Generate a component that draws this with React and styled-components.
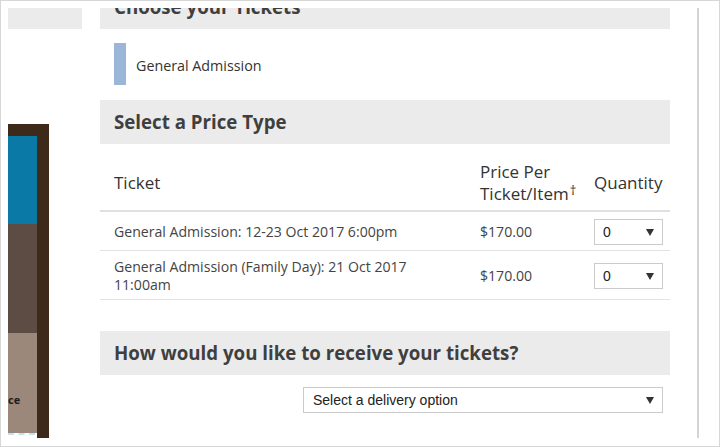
import React from "react";
import styled, { createGlobalStyle } from "styled-components";

const Global = createGlobalStyle`
  html, body { margin: 0; padding: 0; background: #fff; }
  * { box-sizing: border-box; }
`;

const Frame = styled.div`
  width: 720px;
  height: 447px;
  border: 1px solid #d6d6d6;
  padding: 7px 0 0 7px;
  display: flex;
  align-items: flex-start;
  overflow: hidden;
  font-family: "Open Sans", "DejaVu Sans", sans-serif;
  color: #333;
`;

const Sidebar = styled.aside`
  width: 74px;
  display: flex;
  flex-direction: column;
`;

const SideTab = styled.div`
  height: 21px;
  background: #ebebeb;
`;

const Banner = styled.div`
  margin-top: 95px;
  width: 41px;
  height: 314px;
  border-top: 12px solid #3d2a1a;
  border-right: 12px solid #3d2a1a;
  display: flex;
  flex-direction: column;
  background: #fff;
`;

const BannerBlock = styled.div`
  height: ${(p) => p.$h}px;
  background: ${(p) => p.$bg};
  display: flex;
  align-items: flex-end;
  padding-bottom: ${(p) => (p.$pad ? p.$pad : 0)}px;
  overflow: hidden;
`;

const BannerText = styled.span`
  font-family: "Open Sans", sans-serif;
  font-weight: 700;
  font-size: 11px;
  line-height: 14px;
  color: #1e1e1e;
  white-space: nowrap;
`;

const BannerDash = styled.div`
  height: 3px;
  border-top: 2px dashed #bfe3f2;
  margin-right: 2px;
`;

const Content = styled.main`
  margin-left: 18px;
  width: 599px;
  height: 430px;
  padding-right: 27px;
  border-right: 2px solid #d4d4d4;
  overflow: hidden;
`;

const Heading = styled.h2`
  margin: ${(p) => (p.$top !== undefined ? p.$top : 0)}px 0 0;
  height: 44px;
  padding: 10px 14px;
  background: #ebebeb;
  font-size: 18.7px;
  line-height: 24px;
  font-weight: 700;
  color: #3f3f3f;
  white-space: nowrap;
`;

const ChoiceRow = styled.div`
  display: flex;
  align-items: center;
  padding: 14px 14px 15px;
`;

const ChoiceBar = styled.span`
  width: 12px;
  height: 42px;
  background: #9bb6d9;
  margin-right: 10px;
`;

const ChoiceLabel = styled.span`
  font-size: 14.3px;
  line-height: 20px;
  padding-top: 3px;
  color: #333;
`;

const Table = styled.table`
  width: 570px;
  margin-top: 10px;
  border-collapse: collapse;
  table-layout: fixed;
`;

const Th = styled.th`
  text-align: left;
  font-weight: 400;
  font-size: 17px;
  line-height: 22px;
  color: #333;
  padding: 7px ${(p) => (p.$pr !== undefined ? p.$pr : 14)}px 5px 14px;
  vertical-align: middle;
  border-bottom: 2px solid #e0e0e0;
  white-space: nowrap;
`;

const Dagger = styled.sup`
  font-size: 13px;
  line-height: 0;
  vertical-align: 5px;
  margin-left: 1px;
`;

const Td = styled.td`
  font-size: 14.1px;
  line-height: 18px;
  color: #444;
  padding: 7px ${(p) => (p.$qty ? 0 : 14)}px 5px 14px;
  vertical-align: middle;
  border-bottom: 1px solid #e3e3e3;
`;

const SelectBox = styled.div`
  width: ${(p) => p.$w}px;
  height: 26px;
  border: 1px solid #cbcbcb;
  background: #fff;
  display: flex;
  align-items: center;
  justify-content: space-between;
  padding: 0 8px 0 ${(p) => p.$pl}px;
  font-family: "Liberation Sans", Arial, sans-serif;
  font-size: 14px;
  color: #222;
`;

const Arrow = () => (
  <svg width="8" height="7" viewBox="0 0 8 7">
    <path d="M0 0 H8 L4 7 Z" fill="#333" />
  </svg>
);

const DeliveryRow = styled.div`
  display: flex;
  justify-content: flex-end;
  padding: 12px 7px 0 0;
`;

export default function App() {
  return (
    <>
      <Global />
      <Frame>
        <Sidebar>
          <SideTab />
          <Banner>
            <BannerBlock $h={88} $bg="#0a79a6" />
            <BannerBlock $h={109} $bg="#5d4c43" />
            <BannerBlock $h={100} $bg="#9c877b" $pad={26}>
              <BannerText>ce</BannerText>
            </BannerBlock>
            <BannerDash />
          </Banner>
        </Sidebar>
        <Content>
          <Heading $top={-23}>Choose your Tickets</Heading>
          <ChoiceRow>
            <ChoiceBar />
            <ChoiceLabel>General Admission</ChoiceLabel>
          </ChoiceRow>
          <Heading>Select a Price Type</Heading>
          <Table>
            <colgroup>
              <col style={{ width: 366 }} />
              <col style={{ width: 114 }} />
              <col style={{ width: 90 }} />
            </colgroup>
            <thead>
              <tr>
                <Th>Ticket</Th>
                <Th $pr={0}>
                  Price Per
                  <br />
                  Ticket/Item<Dagger>†</Dagger>
                </Th>
                <Th $pr={0}>Quantity</Th>
              </tr>
            </thead>
            <tbody>
              <tr>
                <Td>General Admission: 12-23 Oct 2017 6:00pm</Td>
                <Td>$170.00</Td>
                <Td $qty>
                  <SelectBox $w={69} $pl={8}>
                    0<Arrow />
                  </SelectBox>
                </Td>
              </tr>
              <tr>
                <Td>General Admission (Family Day): 21 Oct 2017 11:00am</Td>
                <Td>$170.00</Td>
                <Td $qty>
                  <SelectBox $w={69} $pl={8}>
                    0<Arrow />
                  </SelectBox>
                </Td>
              </tr>
            </tbody>
          </Table>
          <Heading $top={31}>How would you like to receive your tickets?</Heading>
          <DeliveryRow>
            <SelectBox $w={360} $pl={9}>
              Select a delivery option
              <Arrow />
            </SelectBox>
          </DeliveryRow>
        </Content>
      </Frame>
    </>
  );
}
